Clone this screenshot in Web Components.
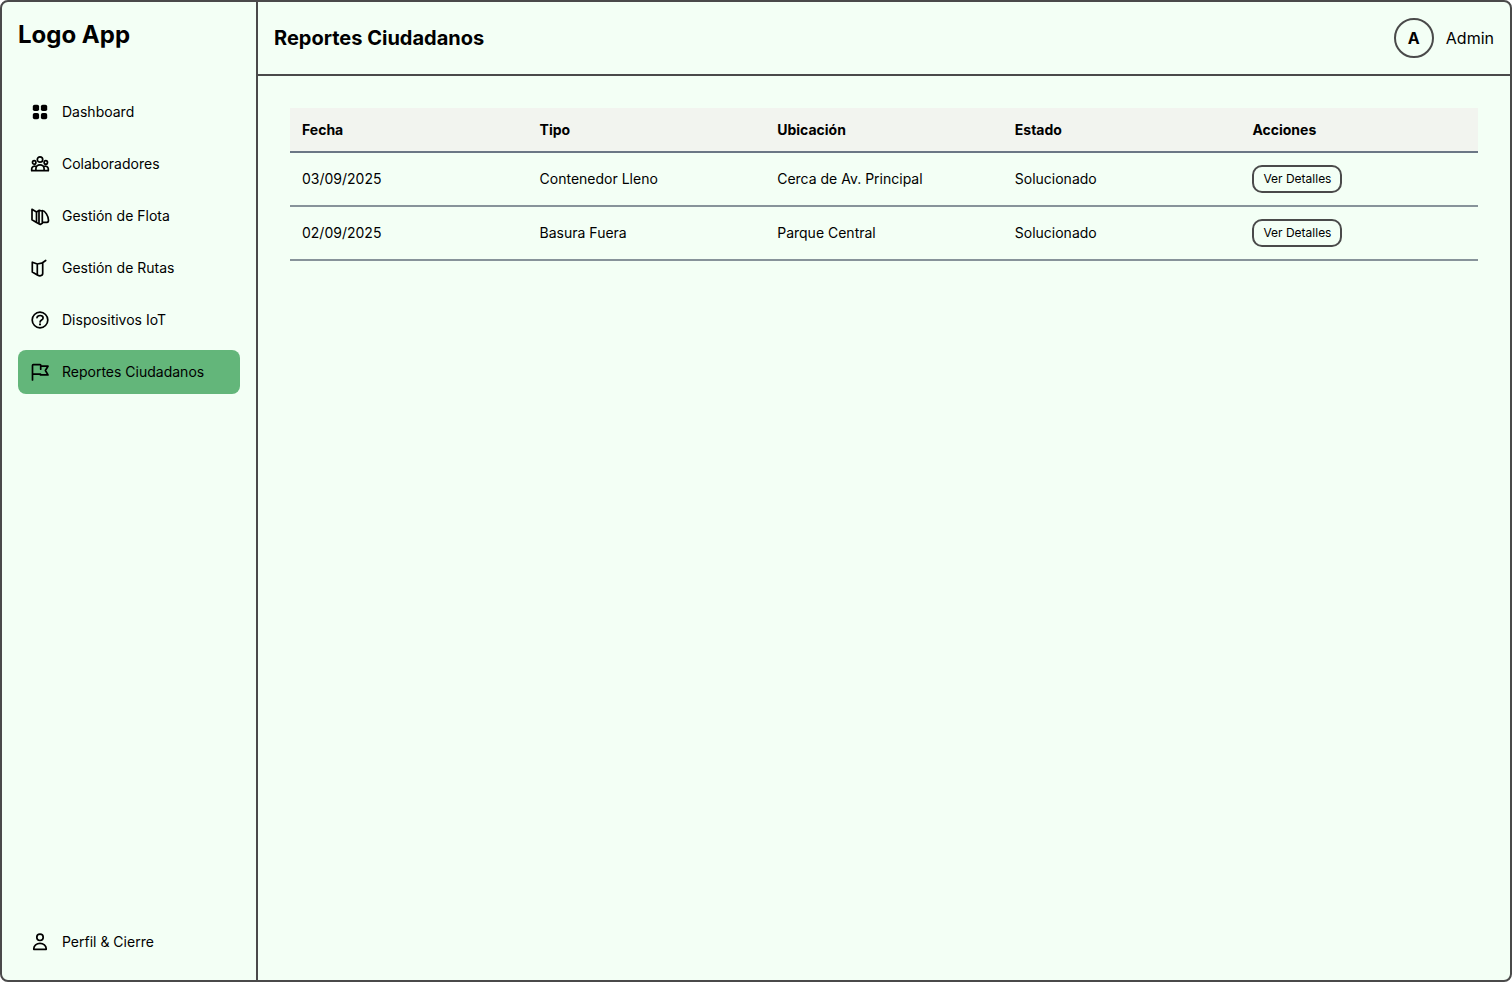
<!DOCTYPE html>
<html lang="es">
<head>
<meta charset="utf-8">
<title>Reportes Ciudadanos</title>
<style>
  html { background: #fff; }
  body { margin: 0; font-family: Inter, "Liberation Sans", sans-serif; color: #000; }
</style>
</head>
<body>
<app-shell>
  <app-sidebar slot="sidebar">
    <nav-item icon="grid">Dashboard</nav-item>
    <nav-item icon="users">Colaboradores</nav-item>
    <nav-item icon="fleet">Gestión de Flota</nav-item>
    <nav-item icon="route">Gestión de Rutas</nav-item>
    <nav-item icon="help">Dispositivos IoT</nav-item>
    <nav-item icon="flag" active>Reportes Ciudadanos</nav-item>
    <nav-item icon="user" slot="footer">Perfil &amp; Cierre</nav-item>
  </app-sidebar>
  <app-header slot="header" user="Admin">Reportes Ciudadanos</app-header>
  <reports-table></reports-table>
</app-shell>
<script>
const ICONS = {
  grid: '<g fill="currentColor" stroke="none"><rect x="2.800" y="2.800" width="6.300" height="6.300" rx="1.8"/><rect x="10.900" y="2.800" width="6.300" height="6.300" rx="1.8"/><rect x="2.800" y="10.900" width="6.300" height="6.300" rx="1.8"/><rect x="10.900" y="10.900" width="6.300" height="6.300" rx="1.8"/></g>',
  users: '<circle cx="10" cy="5.5" r="2.7"/><circle cx="4.2" cy="8.4" r="1.700"/><circle cx="15.8" cy="8.4" r="1.700"/><path d="M5.900 16.700v-2a4.100 3.900 0 0 1 8.200 0v2zM5.900 16.700H1.700v-1.900a2.800 2.800 0 0 1 4.400-2.200M14.100 16.700h4.200v-1.900a2.800 2.800 0 0 0-4.400-2.200"/>',
  fleet: '<path d="M2 3.300v10.500l4.500 2.600V6zM6.500 6l2.800-1.700 3 1v12l-2 1.100-3.800-2M9 4.500v13.300M12.300 4.500c2.700.3 6.200 5.500 6.200 9.800 0 1.500-.5 2-1.500 2h-4.700"/>',
  route: '<path d="M2.300 4.200v9.900l5 2.900V6zM7.300 6l5.400-1.200V15.500c0 1.400-1.100 2.200-2.700 2.300-1 0-1.700-.3-2.700-.8M12.500 4.800l3.200-2.300"/>',
  help: '<circle cx="10" cy="10" r="7.8"/><path d="M7 7.700c.3-1.500 1.500-2.200 3.100-2.200 1.800 0 3 .9 3 2.400 0 2.200-3 2-3 4.100"/><circle cx="10" cy="14.400" r="1.050" fill="currentColor" stroke="none"/>',
  flag: '<path d="M2.500 18V3.500q0-.8.800-.8h6.900q.6 0 .6.700v.8H18l-2.600 4.300L18 12.900h-7.500v-.7h-8M10.700 4.200v3"/>',
  user: '<circle cx="10" cy="5.300" r="3.200"/><path d="M3.800 17.300v-.8a6.200 5.200 0 0 1 12.400 0v.8z"/>'
};

class AppShell extends HTMLElement {
  connectedCallback() {
    this.attachShadow({ mode: 'open' }).innerHTML = `
      <style>
        :host { display: grid; grid-template-columns: 256px minmax(0, 1fr); min-height: 100vh;
          box-sizing: border-box; border: 2px solid #4a4a4a; border-radius: 8px; background: #f3fff5; }
        .page { display: flex; flex-direction: column; }
        main { padding: 32px; }
      </style>
      <slot name="sidebar"></slot>
      <div class="page"><slot name="header"></slot><main><slot></slot></main></div>`;
  }
}

class AppSidebar extends HTMLElement {
  connectedCallback() {
    this.attachShadow({ mode: 'open' }).innerHTML = `
      <style>
        :host { display: flex; flex-direction: column; box-sizing: border-box; padding: 16px;
          border-right: 2px solid #4a4a4a; }
        .logo { font-size: 24px; line-height: 34px; font-weight: 700; margin-bottom: 38px; }
        nav { display: flex; flex-direction: column; gap: 8px; flex: 1; }
      </style>
      <div class="logo">Logo App</div>
      <nav><slot></slot></nav>
      <slot name="footer"></slot>`;
  }
}

class NavItem extends HTMLElement {
  connectedCallback() {
    const current = this.hasAttribute('active') ? 'aria-current="page"' : '';
    this.attachShadow({ mode: 'open' }).innerHTML = `
      <style>
        :host { display: block; }
        a { display: flex; align-items: center; gap: 12px; padding: 12px; border-radius: 8px;
          font-size: 14px; line-height: 20px; color: inherit; text-decoration: none; }
        a[aria-current] { background: #63b67a; }
        svg { flex: none; fill: none; stroke: currentColor; stroke-width: 1.7;
          stroke-linejoin: round; stroke-linecap: round; }
      </style>
      <a href="#" ${current}>
        <svg width="20" height="20" viewBox="0 0 20 20" aria-hidden="true">${ICONS[this.getAttribute('icon')]}</svg>
        <span><slot></slot></span>
      </a>`;
  }
}

class AppHeader extends HTMLElement {
  connectedCallback() {
    const user = this.getAttribute('user');
    this.attachShadow({ mode: 'open' }).innerHTML = `
      <style>
        :host { display: flex; align-items: center; justify-content: space-between;
          padding: 16px; border-bottom: 2px solid #4a4a4a; }
        h1 { margin: 0; font-size: 20px; line-height: 28px; font-weight: 700; }
        .user { display: flex; align-items: center; gap: 12px; font-size: 16px; line-height: 24px; }
        .avatar { display: flex; align-items: center; justify-content: center; box-sizing: border-box;
          width: 40px; height: 40px; border: 2px solid #4a4a4a; border-radius: 50%; font-weight: 700; }
      </style>
      <h1><slot></slot></h1>
      <div class="user"><span class="avatar">${user[0]}</span><span>${user}</span></div>`;
  }
}

class ReportsTable extends HTMLElement {
  connectedCallback() {
    const columns = ['Fecha', 'Tipo', 'Ubicación', 'Estado', 'Acciones'];
    const rows = [
      ['03/09/2025', 'Contenedor Lleno', 'Cerca de Av. Principal', 'Solucionado'],
      ['02/09/2025', 'Basura Fuera', 'Parque Central', 'Solucionado']
    ];
    this.attachShadow({ mode: 'open' }).innerHTML = `
      <style>
        :host { display: block; }
        table { width: 100%; table-layout: fixed; border-spacing: 0; font-size: 14px; line-height: 20px; }
        th, td { box-sizing: border-box; padding: 0 12px; text-align: left; vertical-align: middle; }
        th { height: 45px; font-weight: 700; background: #f2f4ef; border-bottom: 2px solid #6b7785; }
        td { height: 54px; border-bottom: 2px solid #87939a; }
        button { display: block; font: inherit; font-size: 12px; line-height: 16px; color: inherit;
          padding: 4px 9px; border: 2px solid #4a4a4a; border-radius: 10px; background: transparent; }
      </style>
      <table>
        <thead><tr>${columns.map(c => `<th scope="col">${c}</th>`).join('')}</tr></thead>
        <tbody>${rows.map(r => `<tr>${r.map(c => `<td>${c}</td>`).join('')}<td><button type="button">Ver Detalles</button></td></tr>`).join('')}</tbody>
      </table>`;
  }
}

customElements.define('app-shell', AppShell);
customElements.define('app-sidebar', AppSidebar);
customElements.define('nav-item', NavItem);
customElements.define('app-header', AppHeader);
customElements.define('reports-table', ReportsTable);
</script>
</body>
</html>
